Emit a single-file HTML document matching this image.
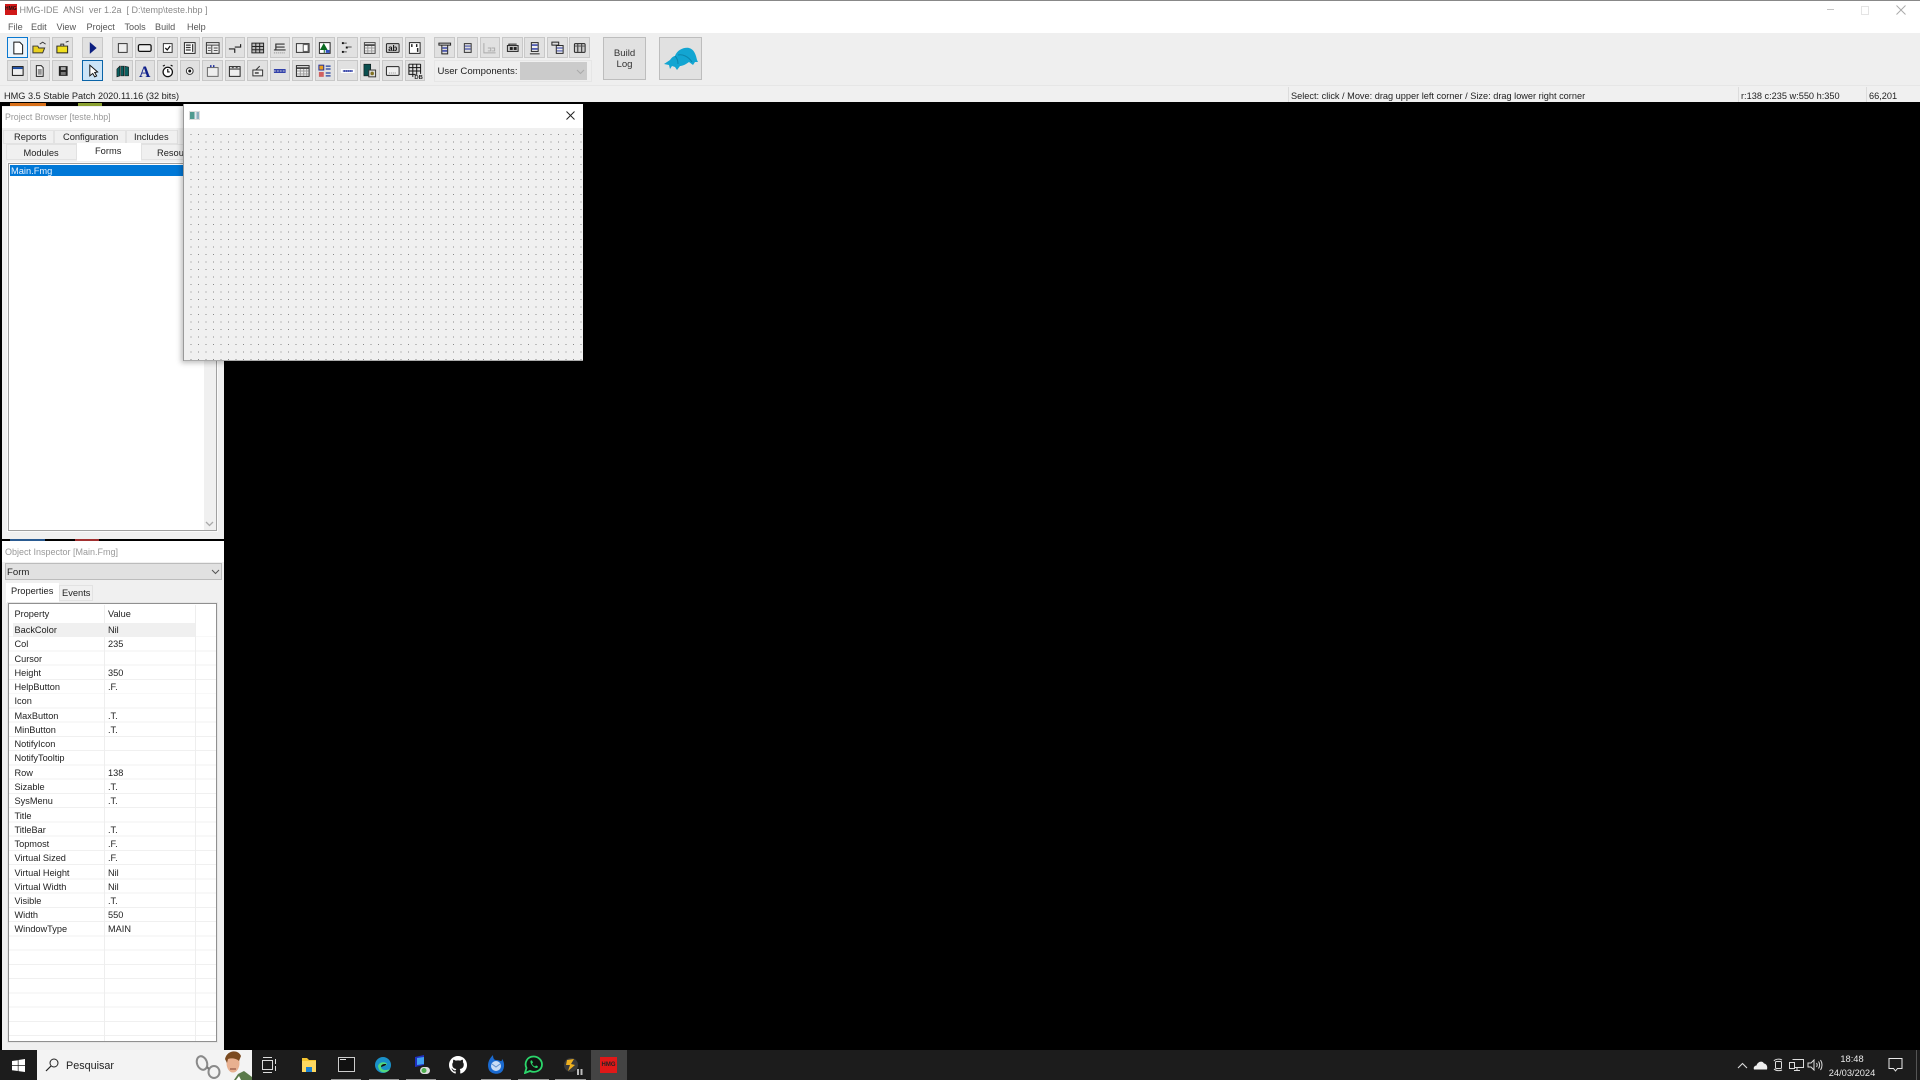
<!DOCTYPE html>
<html><head><meta charset="utf-8"><title>HMG-IDE</title>
<style>
html,body{margin:0;padding:0;background:#000}
body{width:1920px;height:1080px;overflow:hidden;position:relative;font-family:"Liberation Sans",sans-serif;font-size:9.2px;color:#222}
#r{position:absolute;left:0;top:0;width:1920px;height:1080px;overflow:hidden;filter:blur(.3px)}
.a,.t,.b{position:absolute}
.t{white-space:pre;line-height:12px}
.b{width:20.5px;height:21px;background:#e1e1e1;border:1px solid #c8c8c8;box-sizing:border-box}
.b svg{position:absolute;left:-.5px;top:-.5px;width:19.5px;height:20px}
.m{top:21px;color:#555;font-size:9.1px}
</style></head><body><div id="r">

<!-- title bar -->
<div class="a" style="left:0;top:0;width:1920px;height:33px;background:#fff;border-top:1px solid #888;box-sizing:border-box"></div>
<div class="a" style="left:5px;top:4px;width:12px;height:11px;background:#d01818"></div>
<div class="t" style="left:5px;top:4px;font-size:5px;line-height:11px;font-weight:bold;color:#111;width:12px;overflow:hidden">HMG</div>
<div class="t" style="left:19.500px;top:4px;font-size:9px;color:#8a8a8a">HMG-IDE  ANSI  ver 1.2a  [ D:\temp\teste.hbp ]</div>
<div class="t m" style="left:8px">File</div>
<div class="t m" style="left:31px">Edit</div>
<div class="t m" style="left:56.500px">View</div>
<div class="t m" style="left:86.500px">Project</div>
<div class="t m" style="left:124.500px">Tools</div>
<div class="t m" style="left:155px">Build</div>
<div class="t m" style="left:187px">Help</div>
<div class="a" style="left:1827px;top:9px;width:7px;height:1px;background:#c4c4c4"></div>
<div class="a" style="left:1861px;top:6px;width:6px;height:7px;border:1px solid #e4e4e4"></div>
<svg class="a" style="left:1896px;top:5px" width="10" height="10"><path d="M.5 .5L9.500 9.500M9.500 .5L.5 9.500" stroke="#aaa" stroke-width="1" fill="none"/></svg>

<!-- toolbar -->
<div class="a" style="left:0;top:33px;width:1920px;height:55px;background:#efefef"></div>

<div class="b" style="left:7px;top:37px;background:#e9f3fb;border:1px solid #0a78d0"><svg viewBox="0 0 20 20"><path d="M6 4H12L15 7V16H6Z" fill="#fff" stroke="#111"/></svg></div>
<div class="b" style="left:29.500px;top:37px"><svg viewBox="0 0 20 20"><path d="M3 8H8L9 10H15L13 15H3Z" fill="#e8d020" stroke="#333"/><path d="M10 6L13 4L16 6" fill="none" stroke="#333"/></svg></div>
<div class="b" style="left:52px;top:37px"><svg viewBox="0 0 20 20"><path d="M4 8H15V15H4Z" fill="#f0e020" stroke="#222"/><path d="M8 8V6H11V8M13 4L16 3" fill="none" stroke="#333"/></svg></div>
<div class="b" style="left:82px;top:37px"><svg viewBox="0 0 20 20"><path d="M7 4L14 10L7 16Z" fill="#0c1f80"/></svg></div>
<div class="b" style="left:112px;top:37px"><svg viewBox="0 0 20 20"><rect x="5.500" y="5.500" width="9" height="9" fill="#eee" stroke="#333"/></svg></div>
<div class="b" style="left:134.500px;top:37px"><svg viewBox="0 0 20 20"><rect x="3.500" y="6.500" width="13" height="7" rx="1.500" fill="#eee" stroke="#111" stroke-width="1.300"/></svg></div>
<div class="b" style="left:157px;top:37px"><svg viewBox="0 0 20 20"><rect x="5.500" y="5.500" width="9" height="9" fill="#fff" stroke="#333"/><path d="M7.500 10L9.500 12L12.500 8" fill="none" stroke="#111" stroke-width="1.300"/></svg></div>
<div class="b" style="left:179.500px;top:37px"><svg viewBox="0 0 20 20"><rect x="4.500" y="4.500" width="11" height="11" fill="#fff" stroke="#222"/><path d="M6 7H11M6 9.500H11M6 12H11M13 6V14" stroke="#333" stroke-width="1.300"/></svg></div>
<div class="b" style="left:202px;top:37px"><svg viewBox="0 0 20 20"><rect x="3.500" y="4.500" width="13" height="11" fill="#eee" stroke="#333"/><path d="M3 7H17M9 7V15M5 10H8M5 12.500H8M11 10H15M11 12.500H15" stroke="#444"/></svg></div>
<div class="b" style="left:224.500px;top:37px"><svg viewBox="0 0 20 20"><path d="M4 11H10V15M16 6V9H10" fill="none" stroke="#222" stroke-width="1.200"/></svg></div>
<div class="b" style="left:247px;top:37px"><svg viewBox="0 0 20 20"><rect x="4" y="5" width="12" height="10" fill="#bbb" stroke="#222"/><path d="M4 8.500H16M4 11.800H16M8 5V15M12 5V15" stroke="#222"/></svg></div>
<div class="b" style="left:269.500px;top:37px"><svg viewBox="0 0 20 20"><path d="M6 12V6H15M6 9H15M4 12H16" fill="none" stroke="#333" stroke-width="1.200"/><path d="M4 15H16" stroke="#888" stroke-dasharray="1 1"/></svg></div>
<div class="b" style="left:292px;top:37px"><svg viewBox="0 0 20 20"><rect x="3.500" y="5.500" width="13" height="9" fill="#eee" stroke="#333"/><rect x="10.500" y="6.500" width="5" height="7" fill="#fff" stroke="#555"/></svg></div>
<div class="b" style="left:314.500px;top:37px"><svg viewBox="0 0 20 20"><rect x="4.500" y="4.500" width="11" height="11" fill="#fff" stroke="#222"/><path d="M9 5L5 12H9V15H10V12H13Z" fill="#0a6a20"/><rect x="11" y="12" width="4" height="3" fill="#3050c0"/></svg></div>
<div class="b" style="left:337px;top:37px"><svg viewBox="0 0 20 20"><path d="M6 5H9M10 9H14M6 14H9" stroke="#555"/><rect x="4" y="4" width="2" height="2" fill="#111"/><rect x="8" y="8.500" width="2" height="2" fill="#111"/><rect x="4" y="13" width="2" height="2" fill="#111"/></svg></div>
<div class="b" style="left:359.500px;top:37px"><svg viewBox="0 0 20 20"><rect x="4.500" y="4.500" width="11" height="11" fill="#eee" stroke="#444"/><path d="M5 7H15" stroke="#222" stroke-width="1.500"/><path d="M5 10H15M5 13H15M8 8V15M12 8V15" stroke="#999"/></svg></div>
<div class="b" style="left:382px;top:37px"><svg viewBox="0 0 20 20"><rect x="3.500" y="5.500" width="13" height="9" rx="1" fill="#ccc" stroke="#222"/><text x="10" y="13" font-size="8" font-weight="bold" text-anchor="middle" fill="#111" font-family="Liberation Sans">ab</text></svg></div>
<div class="b" style="left:404.500px;top:37px"><svg viewBox="0 0 20 20"><rect x="4.500" y="4.500" width="11" height="11" fill="#fff" stroke="#222"/><path d="M7 6V9M12 6V9M13 10V14" stroke="#222" stroke-width="1.500"/></svg></div>

<div class="b" style="left:434px;top:37px"><svg viewBox="0 0 20 20"><path d="M4 5H16V7H4ZM7 7H13V16H7Z" fill="#ddd" stroke="#222"/><path d="M7.500 10H12.500M7.500 13H12.500" stroke="#2030a0" stroke-width="1.400"/></svg></div>
<div class="b" style="left:457px;top:37px"><svg viewBox="0 0 20 20"><rect x="6.500" y="5.500" width="7" height="9" fill="#ddd" stroke="#333"/><path d="M7 8H13M7 11H13" stroke="#2030a0"/></svg></div>
<div class="b" style="left:479.500px;top:37px"><svg viewBox="0 0 20 20"><path d="M4 5V15H16M8 10H11V13H8M12 10H15V13H12" fill="none" stroke="#aaa"/></svg></div>
<div class="b" style="left:502px;top:37px"><svg viewBox="0 0 20 20"><rect x="4.500" y="7.500" width="11" height="6" fill="#ccc" stroke="#222"/><rect x="7" y="9" width="3" height="3" fill="#222"/><rect x="11" y="9" width="3" height="3" fill="#222"/><path d="M6 7V6H14" stroke="#222" fill="none"/></svg></div>
<div class="b" style="left:524px;top:37px"><svg viewBox="0 0 20 20"><rect x="6.500" y="4.500" width="7" height="9" fill="#eee" stroke="#222"/><path d="M7 7H13M7 11H13" stroke="#2030a0" stroke-width="1.400"/><path d="M5 16H15" stroke="#222"/></svg></div>
<div class="b" style="left:547px;top:37px"><svg viewBox="0 0 20 20"><path d="M4 4H11V7H4Z" fill="#ddd" stroke="#222"/><rect x="8.500" y="7.500" width="7" height="8" fill="#eee" stroke="#222"/><path d="M9 10H15M9 13H15" stroke="#2030a0"/></svg></div>
<div class="b" style="left:569px;top:37px"><svg viewBox="0 0 20 20"><rect x="4.500" y="5.500" width="11" height="9" rx="1" fill="#ccc" stroke="#222"/><path d="M8 6V14M12 6V14" stroke="#222"/><path d="M5 8H15" stroke="#555"/></svg></div>

<div class="b" style="left:7px;top:60px"><svg viewBox="0 0 20 20"><rect x="4.500" y="5.500" width="11" height="9" fill="#eee" stroke="#111"/><rect x="5" y="6" width="10" height="2" fill="#1a4aa0"/></svg></div>
<div class="b" style="left:29.500px;top:60px"><svg viewBox="0 0 20 20"><path d="M6.500 4.500H11.500L13.500 6.500V15.500H6.500Z" fill="#f4f4f4" stroke="#222"/><path d="M8 9H12M8 11H12M8 13H12" stroke="#333"/></svg></div>
<div class="b" style="left:52px;top:60px"><svg viewBox="0 0 20 20"><rect x="6" y="5" width="9" height="10" fill="#222"/><rect x="8" y="6" width="5" height="3" fill="#aaa"/><rect x="8" y="11" width="5" height="3" fill="#777"/></svg></div>
<div class="b" style="left:82px;top:60px;background:#cce4f7;border-color:#0a64a8"><svg viewBox="0 0 20 20"><path d="M7 4L7 15L10 12.500L12 16L14 15L12 11.500L15 11Z" fill="#fff" stroke="#111"/></svg></div>
<div class="b" style="left:112px;top:60px"><svg viewBox="0 0 20 20"><path d="M4 8L7 5L7 15L4 16ZM8 5H11V15H8ZM12 5L16 6V15L12 15Z" fill="#0a6060" stroke="#111" stroke-width=".6"/></svg></div>
<div class="b" style="left:134.500px;top:60px"><svg viewBox="0 0 20 20"><text x="10" y="16" font-size="16" font-weight="bold" text-anchor="middle" fill="#10208a" font-family="Liberation Serif">A</text></svg></div>
<div class="b" style="left:157px;top:60px"><svg viewBox="0 0 20 20"><circle cx="10" cy="11" r="4.800" fill="#fff" stroke="#111" stroke-width="1.300"/><path d="M10 8V11H12M5 5L7 4M15 5L13 4" stroke="#111" fill="none" stroke-width="1.200"/></svg></div>
<div class="b" style="left:179.500px;top:60px"><svg viewBox="0 0 20 20"><circle cx="10" cy="10" r="3.500" fill="#fff" stroke="#333"/><circle cx="10" cy="10" r="1.500" fill="#111"/></svg></div>
<div class="b" style="left:202px;top:60px"><svg viewBox="0 0 20 20"><rect x="4.500" y="6.500" width="11" height="9" fill="#eee" stroke="#666"/><path d="M8 4V6M11 4V6" stroke="#2030a0" stroke-width="1.500"/></svg></div>
<div class="b" style="left:224.500px;top:60px"><svg viewBox="0 0 20 20"><rect x="4.500" y="5.500" width="11" height="10" fill="#eee" stroke="#222"/><path d="M5 8H15" stroke="#222"/><path d="M7 6.500H9M11 6.500H13" stroke="#444"/></svg></div>
<div class="b" style="left:247px;top:60px"><svg viewBox="0 0 20 20"><path d="M5 9H15V15H5ZM12 5L8 9" fill="#eee" stroke="#333"/><rect x="7" y="11" width="4" height="2" fill="#666"/></svg></div>
<div class="b" style="left:269.500px;top:60px"><svg viewBox="0 0 20 20"><rect x="4" y="8" width="12" height="4" fill="#2838a8"/><path d="M4 10H16" stroke="#ddd" stroke-dasharray="2 1"/></svg></div>
<div class="b" style="left:292px;top:60px"><svg viewBox="0 0 20 20"><rect x="3.500" y="4.500" width="13" height="11" fill="#eee" stroke="#222"/><path d="M4 7H16" stroke="#222" stroke-width="1.500"/><path d="M4 10H16M4 13H16M7.500 8V15M11 8V15M14 8V15" stroke="#999"/></svg></div>
<div class="b" style="left:314.500px;top:60px"><svg viewBox="0 0 20 20"><rect x="4" y="4" width="5" height="5" fill="#e8a020" stroke="#2030a0"/><rect x="4" y="11" width="5" height="5" fill="#d06060"/><path d="M11 5H16M11 8H16M11 12H16M11 15H16" stroke="#2040a0" stroke-width="1.300"/></svg></div>
<div class="b" style="left:337px;top:60px"><svg viewBox="0 0 20 20"><rect x="3" y="8" width="14" height="4" fill="#fff"/><rect x="5" y="9" width="10" height="2" fill="#2838a8"/><path d="M5 10H15" stroke="#ddd" stroke-dasharray="1 1"/></svg></div>
<div class="b" style="left:359.500px;top:60px"><svg viewBox="0 0 20 20"><rect x="4" y="3" width="7" height="12" fill="#0a5050" stroke="#111" stroke-width=".6"/><rect x="9" y="9" width="7" height="7" fill="#ddd" stroke="#333"/><circle cx="12.500" cy="12.500" r="1.800" fill="#807020"/></svg></div>
<div class="b" style="left:382px;top:60px"><svg viewBox="0 0 20 20"><rect x="3.500" y="5.500" width="13" height="9" rx="1" fill="#f0f0f0" stroke="#222"/><path d="M6 12H14" stroke="#888" stroke-dasharray="1 1"/></svg></div>
<div class="b" style="left:404.500px;top:60px"><svg viewBox="0 0 20 20"><path d="M4 3V14M8 3V16M12 3V14M16 3V13M4 3H16M4 6.500H16M4 10H16M4 13.500H11" stroke="#111" fill="none"/><text x="14" y="18" font-size="6" font-weight="bold" text-anchor="middle" fill="#222" font-family="Liberation Sans">DB</text></svg></div>

<div class="a" style="left:434px;top:60px;width:156px;height:20px;border:1px solid #e6e6e6"></div>
<div class="t" style="left:437.500px;top:65.500px;font-size:9.6px">User Components:</div>
<div class="a" style="left:520px;top:62px;width:67px;height:18px;background:#cbcbcb"></div>
<svg class="a" style="left:576px;top:69px" width="9" height="6"><path d="M1 1L4.500 4.500L8 1" fill="none" stroke="#aaa"/></svg>

<div class="a" style="left:603px;top:37px;width:41px;height:41px;background:#e1e1e1;border:1px solid #bdbdbd"></div>
<div class="t" style="left:603px;top:47.500px;width:43px;text-align:center;font-size:9.6px;color:#333">Build</div>
<div class="t" style="left:603px;top:59px;width:43px;text-align:center;font-size:9.6px;color:#333">Log</div>
<div class="a" style="left:659px;top:37px;width:41px;height:41px;background:#e1e1e1;border:1px solid #bdbdbd"></div>
<svg class="a" style="left:664px;top:47px" width="34" height="24" viewBox="0 0 34 24"><path d="M0 17L6 13C8 10 10 9 11 9C13 3 20 0 25 1C30 2 32 8 33 13L34 15L31 15L29 18L25 15C21 18 18 19 16 19L13 23L11 20L8 19L6 22L5 18Z" fill="#12a5d2"/><path d="M11 9C13 11 14 14 14 17M14 8C18 7 24 9 28 15" stroke="#0b86ad" fill="none"/></svg>

<!-- status bar -->
<div class="a" style="left:0;top:85px;width:1920px;height:17px;background:#f0f0f0;border-top:1px solid #e6e6e6;box-sizing:border-box"></div>
<div class="a" style="left:1288px;top:87px;width:1px;height:15px;background:#dcdcdc"></div>
<div class="a" style="left:1738px;top:87px;width:1px;height:15px;background:#dcdcdc"></div>
<div class="a" style="left:1866px;top:87px;width:1px;height:15px;background:#dcdcdc"></div>
<div class="t" style="left:4px;top:89.500px">HMG 3.5 Stable Patch 2020.11.16 (32 bits)</div>
<div class="t" style="left:1291px;top:89.500px">Select: click / Move: drag upper left corner / Size: drag lower right corner</div>
<div class="t" style="left:1741px;top:89.500px">r:138 c:235 w:550 h:350</div>
<div class="t" style="left:1869px;top:89.500px">66,201</div>

<!-- wallpaper remnants -->
<div class="a" style="left:10px;top:103px;width:36px;height:4px;background:#d8701a"></div>
<div class="a" style="left:78px;top:103px;width:24px;height:4px;background:#8aa030"></div>
<div class="a" style="left:10px;top:539px;width:35px;height:2px;background:#2a5a90"></div>
<div class="a" style="left:75px;top:539px;width:24px;height:2px;background:#a03030"></div>

<!-- project browser -->
<div class="a" style="left:2px;top:106px;width:222px;height:433px;background:#f0f0f0"></div>
<div class="a" style="left:2px;top:107px;width:222px;height:21px;background:#fff"></div>
<div class="t" style="left:5px;top:111px;color:#999;font-size:8.800px">Project Browser [teste.hbp]</div>
<div class="a" style="left:3px;top:130px;width:51px;height:14px;background:#f0f0f0;border:1px solid #e2e2e2;box-sizing:border-box"></div>
<div class="a" style="left:54px;top:130px;width:72px;height:14px;background:#f0f0f0;border:1px solid #e2e2e2;box-sizing:border-box"></div>
<div class="a" style="left:126px;top:130px;width:52px;height:14px;background:#f0f0f0;border:1px solid #e2e2e2;box-sizing:border-box"></div>
<div class="t" style="left:14px;top:131px;font-size:9.3px">Reports</div>
<div class="t" style="left:63px;top:131px;font-size:9.3px">Configuration</div>
<div class="t" style="left:134px;top:131px;font-size:9.3px">Includes</div>
<div class="a" style="left:6px;top:144px;width:71px;height:16px;background:#f0f0f0;border:1px solid #e2e2e2;box-sizing:border-box"></div>
<div class="a" style="left:141px;top:144px;width:60px;height:16px;background:#f0f0f0;border:1px solid #e2e2e2;box-sizing:border-box"></div>
<div class="a" style="left:77px;top:143px;width:64px;height:18px;background:#fff"></div>
<div class="t" style="left:23.500px;top:146.500px;font-size:9.3px">Modules</div>
<div class="t" style="left:95px;top:145px;font-size:9.3px">Forms</div>
<div class="t" style="left:157px;top:146.500px;font-size:9.3px">Resources</div>
<div class="a" style="left:8px;top:163px;width:209px;height:368px;background:#fff;border:1px solid #a0a0a0;box-sizing:border-box;outline:1px solid #fafafa"></div>
<div class="a" style="left:204px;top:164px;width:12px;height:366px;background:#f0f0f0"></div>
<svg class="a" style="left:205px;top:521px" width="9" height="6"><path d="M1 1L4.500 4.500L8 1" fill="none" stroke="#aaa" stroke-width="1.300"/></svg>
<div class="a" style="left:10px;top:165px;width:190px;height:11px;background:#0078d7"></div>
<div class="t" style="left:11px;top:164.500px;color:#e8f2ff;font-size:9.3px">Main.Fmg</div>

<!-- form window -->
<div class="a" style="left:183px;top:104px;width:400px;height:257px;background:#f0f0f0;box-shadow:-2px 2px 5px rgba(0,0,0,.25);border-left:1px solid #999;box-sizing:border-box"></div>
<div class="a" style="left:184px;top:104px;width:399px;height:24px;background:#fff"></div>
<div class="a" style="left:189px;top:111px;width:11px;height:9px;background:linear-gradient(90deg,#4f9a90 0 50%,#e4e8ee 50% 75%,#8fb0c0 75%);border:1px solid #ddd;box-sizing:border-box"></div>
<svg class="a" style="left:566px;top:111px" width="9" height="9"><path d="M.5 .5L8.500 8.500M8.500 .5L.5 8.500" stroke="#222" fill="none"/></svg>
<div class="a" style="left:184px;top:130px;width:399px;height:231px;background-image:radial-gradient(circle at .5px .5px,#8a8a8a .5px,transparent .7px);background-size:7.500px 7.500px;background-position:6.500px 4px"></div>
<div class="a" style="left:184px;top:360px;width:399px;height:1px;background:#aaa"></div>

<!-- object inspector -->
<div class="a" style="left:2px;top:541px;width:222px;height:509px;background:#f0f0f0"></div>
<div class="a" style="left:2px;top:541px;width:222px;height:21px;background:#fff"></div>
<div class="t" style="left:5px;top:546px;color:#999;font-size:9px">Object Inspector [Main.Fmg]</div>
<div class="a" style="left:5px;top:563px;width:217px;height:17px;background:#e1e1e1;border:1px solid #bcbcbc;box-sizing:border-box"></div>
<div class="t" style="left:7px;top:566.500px;font-size:9.6px">Form</div>
<svg class="a" style="left:211px;top:569px" width="9" height="6"><path d="M1 1L4.500 4.500L8 1" fill="none" stroke="#555"/></svg>
<div class="a" style="left:6px;top:583px;width:53px;height:20px;background:#fff"></div>
<div class="a" style="left:59px;top:585px;width:34px;height:16px;background:#f0f0f0;border:1px solid #e2e2e2;box-sizing:border-box"></div>
<div class="t" style="left:11px;top:585px;font-size:9.3px">Properties</div>
<div class="t" style="left:62px;top:587px;font-size:9.3px">Events</div>
<div class="a" style="left:8px;top:603px;width:209px;height:439px;background:#fff;border:1px solid #909090;box-sizing:border-box;outline:1px solid #e6e6e6"></div>
<div class="a" style="left:9px;top:623px;width:207px;height:418px;background-image:repeating-linear-gradient(180deg,transparent 0,transparent 13.250px,#f0f0f0 13.250px,#f0f0f0 14.250px)"></div>
<div class="a" style="left:104px;top:605px;width:1px;height:436px;background:#eee"></div>
<div class="a" style="left:195px;top:605px;width:1px;height:436px;background:#eee"></div>
<div class="a" style="left:13px;top:623px;width:182px;height:14px;background:#f0f0f0"></div>

<div class="t" style="left:14.500px;top:607.500px">Property</div><div class="t" style="left:108px;top:607.500px">Value</div>
<div class="t" style="left:14.500px;top:624px">BackColor</div><div class="t" style="left:108px;top:624px">Nil</div>
<div class="t" style="left:14.500px;top:638px">Col</div><div class="t" style="left:108px;top:638px">235</div>
<div class="t" style="left:14.500px;top:652.500px">Cursor</div>
<div class="t" style="left:14.500px;top:667px">Height</div><div class="t" style="left:108px;top:667px">350</div>
<div class="t" style="left:14.500px;top:681px">HelpButton</div><div class="t" style="left:108px;top:681px">.F.</div>
<div class="t" style="left:14.500px;top:695px">Icon</div>
<div class="t" style="left:14.500px;top:709.500px">MaxButton</div><div class="t" style="left:108px;top:709.500px">.T.</div>
<div class="t" style="left:14.500px;top:724px">MinButton</div><div class="t" style="left:108px;top:724px">.T.</div>
<div class="t" style="left:14.500px;top:738px">NotifyIcon</div>
<div class="t" style="left:14.500px;top:752px">NotifyTooltip</div>
<div class="t" style="left:14.500px;top:767px">Row</div><div class="t" style="left:108px;top:767px">138</div>
<div class="t" style="left:14.500px;top:781px">Sizable</div><div class="t" style="left:108px;top:781px">.T.</div>
<div class="t" style="left:14.500px;top:795px">SysMenu</div><div class="t" style="left:108px;top:795px">.T.</div>
<div class="t" style="left:14.500px;top:809.500px">Title</div>
<div class="t" style="left:14.500px;top:824px">TitleBar</div><div class="t" style="left:108px;top:824px">.T.</div>
<div class="t" style="left:14.500px;top:838px">Topmost</div><div class="t" style="left:108px;top:838px">.F.</div>
<div class="t" style="left:14.500px;top:852px">Virtual Sized</div><div class="t" style="left:108px;top:852px">.F.</div>
<div class="t" style="left:14.500px;top:866.500px">Virtual Height</div><div class="t" style="left:108px;top:866.500px">Nil</div>
<div class="t" style="left:14.500px;top:880.500px">Virtual Width</div><div class="t" style="left:108px;top:880.500px">Nil</div>
<div class="t" style="left:14.500px;top:895px">Visible</div><div class="t" style="left:108px;top:895px">.T.</div>
<div class="t" style="left:14.500px;top:909px">Width</div><div class="t" style="left:108px;top:909px">550</div>
<div class="t" style="left:14.500px;top:923px">WindowType</div><div class="t" style="left:108px;top:923px">MAIN</div>

<!-- taskbar -->
<div class="a" style="left:0;top:1050px;width:1920px;height:30px;background:#1c1c1c"></div>
<svg class="a" style="left:12px;top:1059px" width="13" height="13"><path d="M0 2L5.800 1.200V6.200H0ZM6.500 1L13 0V6.200H6.500ZM0 7H5.800V12L0 11.200ZM6.500 7H13V13L6.500 12.100Z" fill="#fff"/></svg>
<div class="a" style="left:37px;top:1050px;width:215px;height:30px;background:#f3f3f3"></div>
<svg class="a" style="left:45px;top:1058px" width="14" height="14"><circle cx="9" cy="5" r="4" fill="none" stroke="#222"/><path d="M6 8L1 13" stroke="#222" stroke-width="1.200"/></svg>
<div class="t" style="left:66px;top:1060px;font-size:10.800px;color:#222">Pesquisar</div>
<svg class="a" style="left:194px;top:1050px" width="58" height="30" viewBox="0 0 58 30"><ellipse cx="8" cy="13" rx="5" ry="7" fill="none" stroke="#8a8a8a" stroke-width="2" transform="rotate(-20 8 13)"/><ellipse cx="20" cy="22" rx="5.500" ry="6" fill="none" stroke="#8a8a8a" stroke-width="2"/><path d="M13 17L15 19" stroke="#777" stroke-width="2"/><path d="M40 30L44 24L50 21L58 27V30Z" fill="#5a7a4a"/><path d="M42 30L45 26L47 30Z" fill="#fff"/><ellipse cx="39" cy="13" rx="6.500" ry="9.500" fill="#e8b090"/><path d="M31 9C33 0 44 -1 47 6L45 11C42 8 37 8 34 9L33 13Z" fill="#7a4a20"/><path d="M36 19H42" stroke="#804030"/></svg>

<svg class="a" style="left:261px;top:1057px" width="16" height="16" viewBox="0 0 16 16"><path d="M2 .5H11M2 15.500H11" stroke="#ddd"/><rect x="1.500" y="3.500" width="10" height="9" fill="none" stroke="#ddd"/><path d="M14.500 2V7M14.500 9V14" stroke="#ddd"/></svg>
<svg class="a" style="left:300.500px;top:1057px" width="16" height="16" viewBox="0 0 16 16"><path d="M1 1H6L8 3H15V15H1Z" fill="#f4c430"/><rect x="1" y="4" width="14" height="11" fill="#fdd860"/><rect x="5" y="10" width="6" height="5" fill="#1a80d0"/></svg>
<div class="a" style="left:338px;top:1057px;width:15px;height:13px;background:#111;border:1px solid #ccc"></div>
<div class="a" style="left:340px;top:1059px;width:6px;height:1px;background:#ddd"></div>
<svg class="a" style="left:374px;top:1056px" width="18" height="18" viewBox="0 0 18 18"><circle cx="9" cy="9" r="8" fill="#1a90c8"/><path d="M4 10C5 6 11 5 13 8C13 10 8 10 7 11C7 14 12 15 16 13C13 18 5 18 4 10Z" fill="#50d880"/><path d="M7 11C7 8 10 8 12 8C13 9 10 10 7 11Z" fill="#111"/></svg>
<svg class="a" style="left:413px;top:1055px" width="18" height="20" viewBox="0 0 18 20"><path d="M2 2L11 0V10L2 12Z" fill="#2030c0"/><path d="M4 3L11 2V9L4 10Z" fill="#40a0f0"/><rect x="7" y="12" width="10" height="7" rx="3.500" fill="#ddd"/><circle cx="11" cy="15.500" r="2.500" fill="#50b050"/></svg>
<svg class="a" style="left:449px;top:1056px" width="18" height="18" viewBox="0 0 16 16"><path fill="#fff" d="M8 0C3.580 0 0 3.580 0 8c0 3.540 2.290 6.530 5.470 7.590.4.070.55-.17.55-.38 0-.19-.01-.82-.01-1.490-2.010.37-2.530-.49-2.690-.94-.09-.23-.48-.94-.82-1.130-.28-.15-.68-.52-.01-.53.63-.01 1.080.58 1.230.82.720 1.210 1.870.87 2.330.66.070-.52.280-.87.510-1.070-1.780-.2-3.640-.89-3.640-3.950 0-.87.310-1.590.82-2.150-.08-.2-.36-1.020.08-2.120 0 0 .67-.21 2.200.82.640-.18 1.320-.27 2-.27s1.360.09 2 .27c1.530-1.040 2.200-.82 2.200-.82.440 1.100.16 1.920.08 2.120.51.560.82 1.270.82 2.150 0 3.070-1.870 3.750-3.650 3.950.29.250.54.730.54 1.480 0 1.070-.01 1.930-.01 2.200 0 .21.150.46.550.38A8.010 8.010 0 0 0 16 8c0-4.420-3.580-8-8-8z"/></svg>
<svg class="a" style="left:487px;top:1055px" width="18" height="20" viewBox="0 0 18 20"><path d="M6 0C1 5 0 10 2 15C5 20 14 20 16 15C18 11 17 6 15 4C15 8 13 5 9 5C7 5 6 3 6 0Z" fill="#1a6ad0"/><circle cx="9" cy="11" r="5" fill="#c8dcf5"/><path d="M5 9L9 12L13 9" stroke="#6090d0" fill="none"/></svg>
<svg class="a" style="left:524px;top:1055px" width="19" height="19" viewBox="0 0 19 19"><path d="M1 18L2.500 13C0 8 3 1.500 9.500 1.500C14 1.500 18 5 18 9.500C18 15 12 18.500 6 16Z" fill="#111" stroke="#2bd66b" stroke-width="1.800"/><path d="M6.500 6C6 9 9.500 13 13 13C14 12.500 14 11.500 13.500 11L12 10.500L11 11.500C9.500 11 8.500 10 8 8.500L9 7.500L8 5.500C7.500 5.300 7 5.500 6.500 6Z" fill="#2bd66b"/></svg>
<svg class="a" style="left:561px;top:1055px" width="24" height="22" viewBox="0 0 24 22"><circle cx="10" cy="10" r="7" fill="#3a3a3a"/><path d="M6 5L13 4L10 9L14 10L7 16L9 10L5 10Z" fill="#eeb020"/><rect x="16" y="14" width="2" height="6" fill="#bbb"/><rect x="19.500" y="14" width="2" height="6" fill="#bbb"/></svg>
<div class="a" style="left:591px;top:1050px;width:36px;height:30px;background:#444"></div>
<div class="a" style="left:600px;top:1057px;width:17px;height:16px;background:#e01818"></div>
<div class="t" style="left:600px;top:1059px;width:17px;text-align:center;font-size:6px;font-weight:bold;color:#222">HMG</div>
<div class="a" style="left:331px;top:1079px;width:30px;height:1px;background:#999"></div>
<div class="a" style="left:369px;top:1079px;width:30px;height:1px;background:#999"></div>
<div class="a" style="left:406px;top:1079px;width:30px;height:1px;background:#999"></div>
<div class="a" style="left:481px;top:1079px;width:30px;height:1px;background:#999"></div>
<div class="a" style="left:518px;top:1079px;width:31px;height:1px;background:#999"></div>
<div class="a" style="left:555px;top:1079px;width:31px;height:1px;background:#999"></div>

<svg class="a" style="left:1737px;top:1062px" width="11" height="7"><path d="M1 6L5.500 1.500L10 6" fill="none" stroke="#ddd" stroke-width="1.100"/></svg>
<svg class="a" style="left:1753px;top:1060px" width="15" height="10" viewBox="0 0 15 10"><path d="M1 9.500C0 7 2 5.500 3.500 5.500C4.500 2 9 0 11 3.500C13 3.500 15 6 14 9.500Z" fill="#eee"/></svg>
<svg class="a" style="left:1772px;top:1058px" width="12" height="14" viewBox="0 0 12 14" fill="none" stroke="#ddd"><rect x="3.500" y="3.500" width="6" height="7" rx="1"/><path d="M2 3C3 1 8 .5 10 2M2 11C4 13 8 13 10 12"/></svg>
<svg class="a" style="left:1789px;top:1058px" width="15" height="14" viewBox="0 0 15 14" fill="none" stroke="#ddd"><path d="M3.500 1.500H14.500V9.500H6M.5 4.500H5.500V10.500H.5Z"/><path d="M8 9.500V12.500M5 12.500H11"/></svg>
<svg class="a" style="left:1807px;top:1059px" width="16" height="12" viewBox="0 0 16 12" fill="none" stroke="#ddd"><path d="M1 4H4L7 1V11L4 8H1Z"/><path d="M9.500 4C10.500 5.500 10.500 6.500 9.500 8M11.500 2.500C13 4.500 13 7.500 11.500 9.500M13.500 1C15.500 4 15.500 8 13.500 11"/></svg>
<div class="t" style="left:1821px;top:1052.500px;width:62px;text-align:center;font-size:9.3px;color:#e8e8e8">18:48</div>
<div class="t" style="left:1821px;top:1066.500px;width:62px;text-align:center;font-size:9.3px;color:#e8e8e8">24/03/2024</div>
<svg class="a" style="left:1888px;top:1058px" width="15" height="14" viewBox="0 0 15 14" fill="none" stroke="#e8e8e8"><path d="M1 .5H14V10.500H9.500L7.500 13L5.500 10.500H1Z"/></svg>
<div class="a" style="left:1916px;top:1050px;width:1px;height:30px;background:#555"></div>
</div></body></html>
